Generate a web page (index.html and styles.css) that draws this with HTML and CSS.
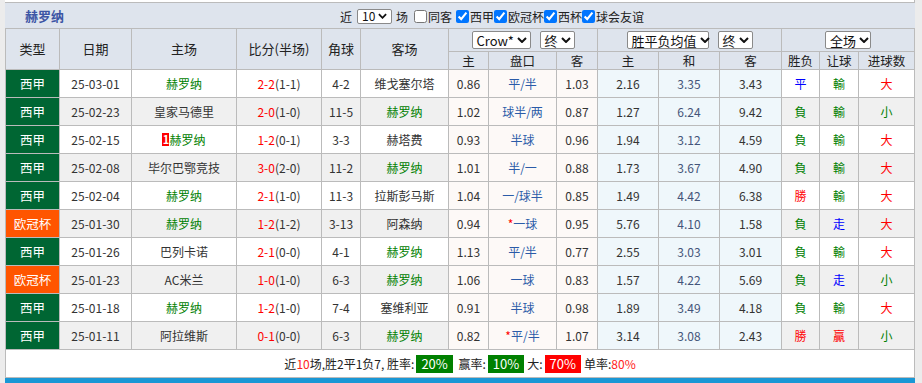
FILE: index.html
```html
<!DOCTYPE html>
<html lang="zh-CN">
<head>
    <meta charset="UTF-8">
    <title>赫罗纳 近期战绩</title>
    <link rel="stylesheet" href="styles.css">
</head>
<body>
<div class="wrap">
    <div class="topbox"></div>

    <div class="titlebar">
        <span class="team-title">赫罗纳</span>
        <div class="filters">
            <span>近</span>
            <span class="sel sel-num">10<svg class="chev" viewBox="0 0 10 6" width="9" height="6"><path d="M1 1l4 4 4-4" fill="none" stroke="#111" stroke-width="2"/></svg></span>
            <span>场</span>
            <label><input type="checkbox">同客</label>
            <label><input type="checkbox" checked>西甲</label><label><input type="checkbox" checked>欧冠杯</label><label><input type="checkbox" checked>西杯</label><label><input type="checkbox" checked>球会友谊</label>
        </div>
    </div>

    <table class="records">
        <colgroup>
            <col style="width:54px"><col style="width:72px"><col style="width:105px"><col style="width:85px">
            <col style="width:39px"><col style="width:88px"><col style="width:40px"><col style="width:68px">
            <col style="width:41px"><col style="width:61px"><col style="width:61px"><col style="width:62px">
            <col style="width:38px"><col style="width:39px"><col style="width:56px">
        </colgroup>
        <thead>
            <tr class="head1">
                <th rowspan="2">类型</th>
                <th rowspan="2">日期</th>
                <th rowspan="2">主场</th>
                <th rowspan="2">比分(半场)</th>
                <th rowspan="2">角球</th>
                <th rowspan="2">客场</th>
                <th colspan="3">
                    <div class="sel-group">
                        <span class="sel sel-crow">Crow*<svg class="chev" viewBox="0 0 10 6" width="10" height="6"><path d="M1 1l4 4 4-4" fill="none" stroke="#111" stroke-width="2"/></svg></span>
                        <span class="sel sel-end">终<svg class="chev" viewBox="0 0 10 6" width="10" height="6"><path d="M1 1l4 4 4-4" fill="none" stroke="#111" stroke-width="2"/></svg></span>
                    </div>
                </th>
                <th colspan="3">
                    <div class="sel-group">
                        <span class="sel sel-avg">胜平负均值<svg class="chev" viewBox="0 0 10 6" width="10" height="6"><path d="M1 1l4 4 4-4" fill="none" stroke="#111" stroke-width="2"/></svg></span>
                        <span class="sel sel-end">终<svg class="chev" viewBox="0 0 10 6" width="10" height="6"><path d="M1 1l4 4 4-4" fill="none" stroke="#111" stroke-width="2"/></svg></span>
                    </div>
                </th>
                <th colspan="3">
                    <div class="sel-group">
                        <span class="sel sel-full">全场<svg class="chev" viewBox="0 0 10 6" width="10" height="6"><path d="M1 1l4 4 4-4" fill="none" stroke="#111" stroke-width="2"/></svg></span>
                    </div>
                </th>
            </tr>
            <tr class="head2">
                <th>主</th><th>盘口</th><th>客</th>
                <th>主</th><th>和</th><th>客</th>
                <th>胜负</th><th>让球</th><th>进球数</th>
            </tr>
        </thead>
        <tbody>
            <tr>
                <td class="type liga">西甲</td><td>25-03-01</td><td class="us">赫罗纳</td>
                <td><span class="ft">2-2</span>(1-1)</td><td>4-2</td><td>维戈塞尔塔</td>
                <td class="ah">0.86</td><td class="ah line">平/半</td><td class="ah">1.03</td>
                <td class="eu">2.16</td><td class="eu mid">3.35</td><td class="eu">3.43</td>
                <td class="blue">平</td><td class="green">輸</td><td class="red">大</td>
            </tr>
            <tr>
                <td class="type liga">西甲</td><td>25-02-23</td><td>皇家马德里</td>
                <td><span class="ft">2-0</span>(1-0)</td><td>11-5</td><td class="us">赫罗纳</td>
                <td class="ah">1.02</td><td class="ah line">球半/两</td><td class="ah">0.87</td>
                <td class="eu">1.27</td><td class="eu mid">6.24</td><td class="eu">9.42</td>
                <td class="green">負</td><td class="green">輸</td><td class="green">小</td>
            </tr>
            <tr>
                <td class="type liga">西甲</td><td>25-02-15</td><td class="us"><span class="card">1</span>赫罗纳</td>
                <td><span class="ft">1-2</span>(0-1)</td><td>3-3</td><td>赫塔费</td>
                <td class="ah">0.93</td><td class="ah line">半球</td><td class="ah">0.96</td>
                <td class="eu">1.94</td><td class="eu mid">3.12</td><td class="eu">4.59</td>
                <td class="green">負</td><td class="green">輸</td><td class="red">大</td>
            </tr>
            <tr>
                <td class="type liga">西甲</td><td>25-02-08</td><td>毕尔巴鄂竞技</td>
                <td><span class="ft">3-0</span>(2-0)</td><td>11-2</td><td class="us">赫罗纳</td>
                <td class="ah">1.01</td><td class="ah line">半/一</td><td class="ah">0.88</td>
                <td class="eu">1.73</td><td class="eu mid">3.67</td><td class="eu">4.90</td>
                <td class="green">負</td><td class="green">輸</td><td class="red">大</td>
            </tr>
            <tr>
                <td class="type liga">西甲</td><td>25-02-04</td><td class="us">赫罗纳</td>
                <td><span class="ft">2-1</span>(1-0)</td><td>11-3</td><td>拉斯彭马斯</td>
                <td class="ah">1.04</td><td class="ah line">一/球半</td><td class="ah">0.85</td>
                <td class="eu">1.49</td><td class="eu mid">4.42</td><td class="eu">6.38</td>
                <td class="red">勝</td><td class="green">輸</td><td class="red">大</td>
            </tr>
            <tr>
                <td class="type ucl">欧冠杯</td><td>25-01-30</td><td class="us">赫罗纳</td>
                <td><span class="ft">1-2</span>(1-2)</td><td>3-13</td><td>阿森纳</td>
                <td class="ah">0.94</td><td class="ah line"><span class="star">*</span>一球</td><td class="ah">0.95</td>
                <td class="eu">5.76</td><td class="eu mid">4.10</td><td class="eu">1.58</td>
                <td class="green">負</td><td class="blue">走</td><td class="red">大</td>
            </tr>
            <tr>
                <td class="type liga">西甲</td><td>25-01-26</td><td>巴列卡诺</td>
                <td><span class="ft">2-1</span>(0-0)</td><td>4-1</td><td class="us">赫罗纳</td>
                <td class="ah">1.13</td><td class="ah line">平/半</td><td class="ah">0.77</td>
                <td class="eu">2.55</td><td class="eu mid">3.03</td><td class="eu">3.01</td>
                <td class="green">負</td><td class="green">輸</td><td class="red">大</td>
            </tr>
            <tr>
                <td class="type ucl">欧冠杯</td><td>25-01-23</td><td>AC米兰</td>
                <td><span class="ft">1-0</span>(1-0)</td><td>6-3</td><td class="us">赫罗纳</td>
                <td class="ah">1.06</td><td class="ah line">一球</td><td class="ah">0.83</td>
                <td class="eu">1.57</td><td class="eu mid">4.22</td><td class="eu">5.69</td>
                <td class="green">負</td><td class="blue">走</td><td class="green">小</td>
            </tr>
            <tr>
                <td class="type liga">西甲</td><td>25-01-18</td><td class="us">赫罗纳</td>
                <td><span class="ft">1-2</span>(1-0)</td><td>7-4</td><td>塞维利亚</td>
                <td class="ah">0.91</td><td class="ah line">半球</td><td class="ah">0.98</td>
                <td class="eu">1.89</td><td class="eu mid">3.49</td><td class="eu">4.18</td>
                <td class="green">負</td><td class="green">輸</td><td class="red">大</td>
            </tr>
            <tr>
                <td class="type liga">西甲</td><td>25-01-11</td><td>阿拉维斯</td>
                <td><span class="ft">0-1</span>(0-0)</td><td>6-3</td><td class="us">赫罗纳</td>
                <td class="ah">0.82</td><td class="ah line"><span class="star">*</span>平/半</td><td class="ah">1.07</td>
                <td class="eu">3.14</td><td class="eu mid">3.08</td><td class="eu">2.43</td>
                <td class="red">勝</td><td class="red">贏</td><td class="green">小</td>
            </tr>
        </tbody>
        <tfoot>
            <tr>
                <td colspan="15" class="summary">
                    近<span class="hl">10</span>场,胜2平1负7, 胜率:<span class="badge win">20%</span>
                    赢率:<span class="badge win">10%</span>大:<span class="badge over">70%</span>单率:<span class="hl">80%</span>
                </td>
            </tr>
        </tfoot>
    </table>

    <div class="bottombar"></div>
</div>
</body>
</html>
```

FILE: styles.css
```css
* { box-sizing: border-box; }
body {
    margin: 0;
    background: #ececec;
    font-family: "Noto Sans CJK SC", "Noto Sans", sans-serif;
    font-size: 12px;
    color: #333;
}
.wrap {
    width: 910px;
    margin-left: 5px;
}
.topbox {
    height: 3px;
    background: #fff;
    border-bottom: 1px solid #bbb;
    border-right: 1px solid #bbb;
}
.titlebar {
    height: 25px;
    background: #dee4ed;
    display: flex;
    align-items: center;
}
.team-title {
    width: 335px;
    padding-left: 20px;
    font-size: 13px;
    font-weight: bold;
    color: #3c55a5;
}
.filters {
    display: flex;
    align-items: center;
    font-size: 12px;
    color: #222;
    padding-top: 1px;
}
.filters label {
    display: flex;
    align-items: center;
}
.filters input {
    width: 13px;
    height: 13px;
    margin: 0 1px 0 0;
}
.filters label:first-of-type input { margin-left: 6px; }
.filters label:nth-of-type(2) input { margin-left: 4px; }

.sel {
    display: inline-flex;
    align-items: center;
    justify-content: space-between;
    height: 18px;
    padding: 0 4px 0 4px;
    background: #fff;
    border: 1px solid #8a8a8a;
    border-radius: 2px;
    font-size: 13px;
    color: #111;
    line-height: 1;
}
.chev { flex: none; margin-left: 3px; }
.sel-num {
    height: 15px;
    width: 35px;
    margin: 0 4px 0 5px;
    font-size: 12px;
}
.sel-crow { width: 59px; }
.sel-avg { width: 82px; }
.sel-end { width: 35px; }
.sel-full { width: 46px; }
.sel-group {
    display: flex;
    justify-content: center;
    gap: 9px;
}

.records {
    width: 910px;
    table-layout: fixed;
    border-collapse: collapse;
}
.records th,
.records td {
    border: 1px solid #bbb;
    padding: 0;
    text-align: center;
    white-space: nowrap;
    font-weight: normal;
    line-height: 16px;
}
.records th {
    background: #dee4ed;
    color: #222;
    font-size: 13px;
}
.head1 th { height: 23px; }
.head2 th { height: 18px; font-size: 12.5px; }

.records tbody td {
    height: 28px;
    font-size: 12px;
    background: #fff;
    color: #333;
}
.records tbody tr:nth-child(even) td { background: #f0f0f0; }
.records tbody tr td.ah { background: #fdf9f7; }
.records tbody tr td.eu { background: #eff7fb; }
.records tbody tr td.type { color: #fff; font-size: 12.5px; }
.records tbody tr td.liga { background: #006633; }
.records tbody tr td.ucl { background: #ff5500; }

.us { color: #008000 !important; }
.ft { color: #ff0000; }
.line { color: #2b5ba8 !important; }
.mid { color: #44557a !important; }
.star { color: #ff0000; }
.card {
    display: inline-block;
    background: #f00;
    color: #fff;
    font-weight: bold;
    width: 7px;
    line-height: 13px;
    font-size: 11px;
    vertical-align: 1px;
}
.blue { color: #0000ff !important; }
.green { color: #008000 !important; }
.red { color: #ff0000 !important; }

.records .summary {
    height: 28px;
    background: #fff;
    color: #222;
    font-size: 12px;
}
.hl { color: #ff2222; }
.badge {
    display: inline-block;
    color: #fff;
    padding: 0 5px;
    line-height: 18px;
    font-size: 13px;
    margin: 0 3px 0 2px;
}
.badge.win { background: #008000; }
.badge.over { background: #ff0000; }

.bottombar {
    height: 5px;
    background: #1a97d5;
}
```
